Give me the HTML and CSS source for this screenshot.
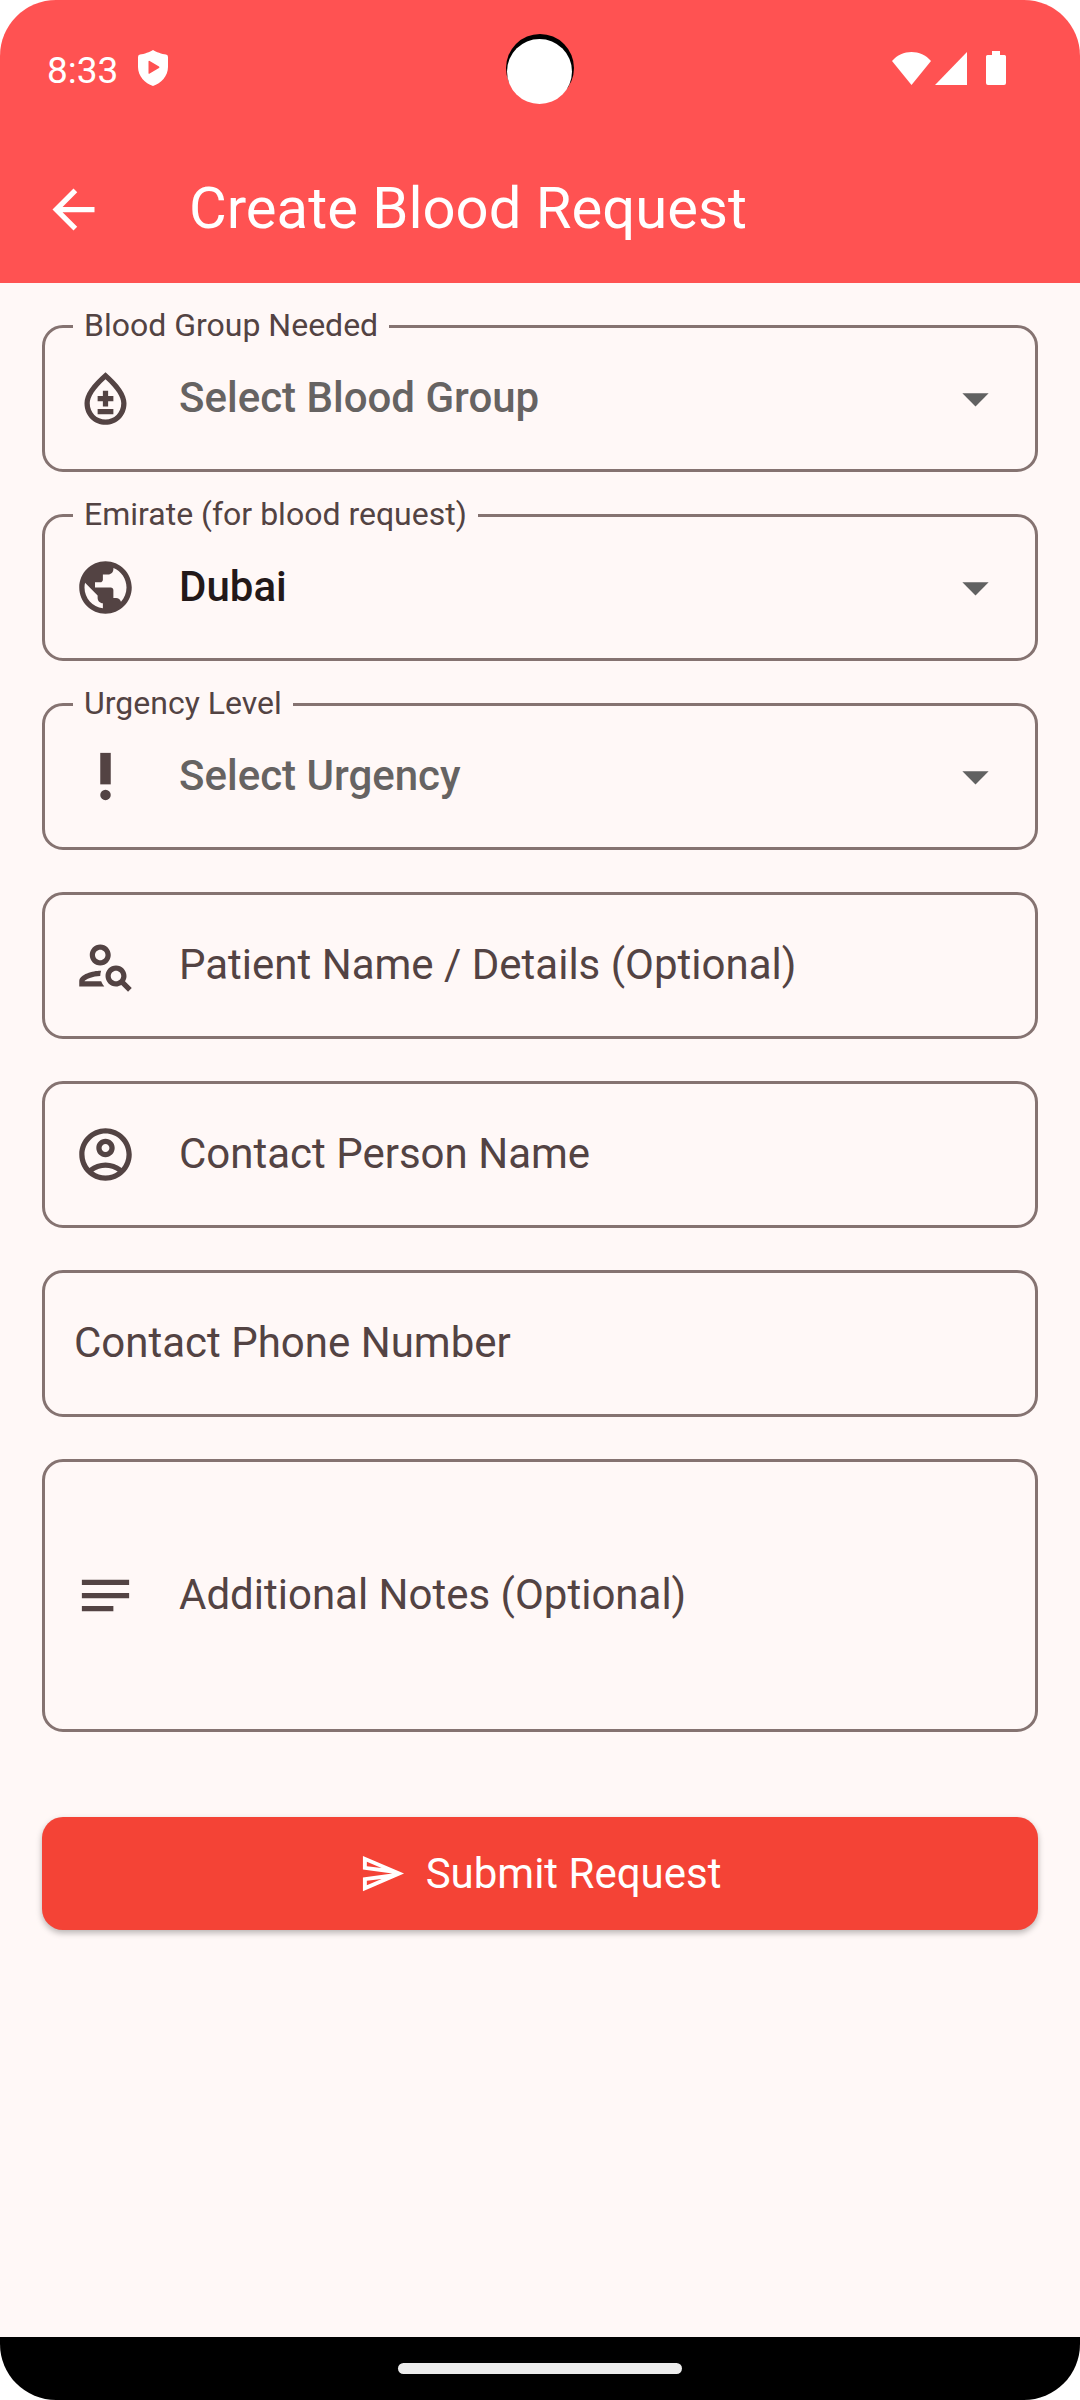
FILE: index.html
```html
<!DOCTYPE html>
<html lang="en">
<head>
<meta charset="utf-8">
<meta name="viewport" content="width=device-width, initial-scale=1">
<title>Create Blood Request</title>
<link rel="stylesheet" href="styles.css">
</head>
<body>
<div class="screen">
  <header class="top">
    <div class="status">
      <time class="clock">8:33</time>
      <svg class="shield" viewBox="0 0 30 36" aria-hidden="true"><path fill-rule="evenodd" d="M15 0C18 2 24 4 28 4.600Q30 5 30 7V17C30 26 23 33.500 15 36C7 33.500 0 26 0 17V7Q0 5 2 4.600C6 4 12 2 15 0ZM10.500 11.500V23Q10.500 24.300 11.700 23.600L21 18Q22 17.200 21 16.500L11.700 10.900Q10.500 10.200 10.500 11.500Z"/></svg>
      <span class="camera"></span>
      <div class="signals">
        <svg class="wifi" viewBox="0 0 39 33" aria-hidden="true"><path d="M0 9C10-3 29-3 39 9L19.500 33Z"/></svg>
        <svg class="cell" viewBox="0 0 32 33" aria-hidden="true"><path d="M32 0V33H0Z"/></svg>
        <svg class="battery" viewBox="0 0 20 34" aria-hidden="true"><path d="M6 0H14V4H18.500Q20 4 20 5.500V32Q20 34 18 34H2Q0 34 0 32V5.500Q0 4 1.500 4H6Z"/></svg>
      </div>
    </div>
    <div class="appbar">
      <button class="back" type="button" aria-label="Back">
        <svg class="icon" viewBox="0 0 24 24" aria-hidden="true"><path d="M20 11H7.830l5.590-5.590L12 4l-8 8 8 8 1.410-1.410L7.830 13H20v-2z"/></svg>
      </button>
      <h1 class="title">Create Blood Request</h1>
    </div>
  </header>

  <main class="content">
    <form class="form">
      <div class="field">
        <label class="float" for="group">Blood Group Needed</label>
        <svg class="icon" viewBox="0 0 24 24" aria-hidden="true"><path d="M12 2c-5.330 4.550-8 8.480-8 11.800 0 4.980 3.800 8.200 8 8.200s8-3.220 8-8.200c0-3.320-2.670-7.250-8-11.800zm0 18c-3.350 0-6-2.570-6-6.200 0-2.340 1.950-5.440 6-9.140 4.050 3.700 6 6.790 6 9.140 0 3.630-2.650 6.200-6 6.200zM9 16h6v2H9zM11 9h2v2h2v2h-2v2h-2v-2H9v-2h2z"/></svg>
        <select class="control choice unset" id="group">
          <option>Select Blood Group</option>
          <option>A+</option><option>A-</option><option>B+</option><option>B-</option>
          <option>AB+</option><option>AB-</option><option>O+</option><option>O-</option>
        </select>
        <svg class="icon caret" viewBox="0 0 24 24" aria-hidden="true"><path d="M7 10l5 5 5-5z"/></svg>
      </div>

      <div class="field">
        <label class="float" for="emirate">Emirate (for blood request)</label>
        <svg class="icon" viewBox="0 0 24 24" aria-hidden="true"><path d="M12 2C6.480 2 2 6.480 2 12s4.480 10 10 10 10-4.480 10-10S17.520 2 12 2zm-1 17.930c-3.950-.490-7-3.850-7-7.930 0-.620.080-1.210.210-1.790L9 15v1c0 1.100.900 2 2 2v1.930zm6.900-2.540c-.260-.810-1-1.390-1.900-1.390h-1v-3c0-.550-.450-1-1-1H8v-2h2c.550 0 1-.450 1-1V7h2c1.100 0 2-.900 2-2v-.410c2.930 1.190 5 4.060 5 7.410 0 2.080-.800 3.970-2.100 5.390z"/></svg>
        <select class="control choice" id="emirate">
          <option>Dubai</option><option>Abu Dhabi</option><option>Sharjah</option><option>Ajman</option>
        </select>
        <svg class="icon caret" viewBox="0 0 24 24" aria-hidden="true"><path d="M7 10l5 5 5-5z"/></svg>
      </div>

      <div class="field">
        <label class="float" for="urgency">Urgency Level</label>
        <svg class="icon" viewBox="0 0 24 24" aria-hidden="true"><circle cx="12" cy="19" r="2"/><path d="M10 3h4v12h-4z"/></svg>
        <select class="control choice unset" id="urgency">
          <option>Select Urgency</option><option>Low</option><option>Medium</option><option>High</option>
        </select>
        <svg class="icon caret" viewBox="0 0 24 24" aria-hidden="true"><path d="M7 10l5 5 5-5z"/></svg>
      </div>

      <div class="field">
        <svg class="icon" viewBox="0 0 24 24" aria-hidden="true"><path d="M10 12c2.210 0 4-1.790 4-4s-1.790-4-4-4-4 1.790-4 4 1.790 4 4 4zm0-6c1.100 0 2 .900 2 2s-.900 2-2 2-2-.900-2-2 .900-2 2-2zM4 18c.220-.720 3.310-2 6-2 0-.700.130-1.370.350-1.990C7.620 13.910 2 15.270 2 18v2h9.540c-.520-.580-.930-1.250-1.190-2H4zM19.430 18.020C19.790 17.430 20 16.740 20 16c0-2.210-1.790-4-4-4s-4 1.790-4 4 1.790 4 4 4c.740 0 1.430-.220 2.020-.570L20.590 22 22 20.590l-2.570-2.570zM16 18c-1.100 0-2-.900-2-2s.900-2 2-2 2 .900 2 2-.900 2-2 2z"/></svg>
        <input class="control" type="text" placeholder="Patient Name / Details (Optional)" aria-label="Patient Name / Details (Optional)">
      </div>

      <div class="field">
        <svg class="icon" viewBox="0 0 24 24" aria-hidden="true"><path d="M12 2C6.480 2 2 6.480 2 12s4.480 10 10 10 10-4.480 10-10S17.520 2 12 2zM7.350 18.500C8.660 17.560 10.260 17 12 17s3.340.560 4.650 1.500C15.340 19.440 13.740 20 12 20s-3.340-.560-4.650-1.500zm10.790-1.380C16.450 15.800 14.320 15 12 15s-4.450.800-6.140 2.120C4.700 15.730 4 13.950 4 12c0-4.420 3.580-8 8-8s8 3.580 8 8c0 1.950-.700 3.730-1.860 5.120zM12 6c-1.930 0-3.500 1.570-3.500 3.500S10.070 13 12 13s3.500-1.570 3.500-3.500S13.930 6 12 6zm0 5c-.830 0-1.500-.670-1.500-1.500S11.170 8 12 8s1.500.670 1.500 1.500S12.830 11 12 11z"/></svg>
        <input class="control" type="text" placeholder="Contact Person Name" aria-label="Contact Person Name">
      </div>

      <div class="field">
        <input class="control" type="tel" placeholder="Contact Phone Number" aria-label="Contact Phone Number">
      </div>

      <div class="field">
        <svg class="icon" viewBox="0 0 24 24" aria-hidden="true"><path d="M21 11H3v2h18v-2zM3 18h12v-2H3v2zM21 6H3v2h18V6z"/></svg>
        <textarea class="control notes" rows="1" placeholder="Additional Notes (Optional)" aria-label="Additional Notes (Optional)"></textarea>
      </div>

      <button class="submit" type="submit">
        <svg class="send" viewBox="0 0 24 24" aria-hidden="true"><path d="M4.010 6.030l7.510 3.220-7.520-1 .010-2.220m7.500 8.720L4 17.970v-2.220l7.510-1M2.010 3L2 10l15 2-15 2 .010 7L23 12 2.010 3z"/></svg>
        <span>Submit Request</span>
      </button>
    </form>
  </main>

  <footer class="navbar"><span class="pill"></span></footer>
</div>
</body>
</html>
```

FILE: styles.css
```css
:root {
  --surface: #fff8f7;
  --ink: #231919;
  --muted: #534343;
  --outline: #857371;
}

* {
  box-sizing: border-box;
}

body {
  margin: 0;
  background: #fff;
  color: var(--ink);
  font-family: Roboto, "Liberation Sans", sans-serif;
  font-size: 42px;
}

svg {
  display: block;
  flex: none;
  fill: currentColor;
}

.screen {
  display: flex;
  flex-direction: column;
  min-height: 100vh;
  border-radius: 56px;
  overflow: hidden;
  background: var(--surface);
}

/* Status bar and app bar */
.top {
  background: #ff5252;
  color: #fff;
}

.status {
  position: relative;
  display: flex;
  align-items: center;
  height: 136px;
  padding: 0 74px 0 47px;
}

.clock {
  padding-top: 6px;
  font-size: 37px;
  line-height: 44px;
}

.shield {
  width: 30px;
  height: 36px;
  margin-left: 20px;
}

.camera {
  position: absolute;
  top: 34px;
  left: 50%;
  width: 68px;
  height: 68px;
  margin-left: -34px;
  border-radius: 50%;
  background: #000;
}

.camera::after {
  content: "";
  position: absolute;
  top: 5px;
  left: 1px;
  width: 65px;
  height: 65px;
  border-radius: 50%;
  background: #fff;
}

.signals {
  display: flex;
  align-items: center;
  margin-left: auto;
}

.wifi {
  width: 39px;
  height: 33px;
}

.cell {
  width: 32px;
  height: 33px;
  margin-left: 4px;
}

.battery {
  width: 20px;
  height: 34px;
  margin-left: 19px;
}

.appbar {
  display: flex;
  align-items: center;
  height: 147px;
  padding: 0 42px;
}

.back {
  padding: 0;
  border: 0;
  background: none;
  color: inherit;
}

.title {
  margin: 0 0 0 84px;
  padding-bottom: 3px;
  font-size: 58px;
  font-weight: 400;
  line-height: 74px;
}

.icon {
  width: 63px;
  height: 63px;
}

/* Form */
.content {
  flex: 1;
  padding: 42px;
}

.form {
  display: flex;
  flex-direction: column;
  gap: 42px;
}

.field {
  position: relative;
  display: flex;
  align-items: center;
  gap: 42px;
  padding: 0 28px 0 29px;
  border: 3px solid var(--outline);
  border-radius: 21px;
  color: var(--muted);
}

.float {
  position: absolute;
  top: -22px;
  left: 28px;
  padding: 0 11px;
  background: var(--surface);
  font-size: 32px;
  line-height: 38px;
}

.control {
  flex: 1;
  min-width: 0;
  height: 141px;
  margin: 0;
  padding: 38px 0 40px;
  border: 0;
  outline: 0;
  background: none;
  color: var(--ink);
  font: inherit;
  line-height: 63px;
}

.control::placeholder {
  color: var(--muted);
  opacity: 1;
}

.choice {
  appearance: none;
  padding: 0 0 2px;
  font-weight: 500;
}

.unset {
  color: #666362;
}

.caret {
  color: #616161;
  pointer-events: none;
}

.notes {
  display: block;
  height: 267px;
  padding: 101px 0 103px;
  resize: none;
}

.submit {
  display: flex;
  align-items: center;
  justify-content: center;
  gap: 20px;
  margin-top: 43px;
  padding: 25px;
  border: 0;
  border-radius: 21px;
  background: #f44336;
  box-shadow: 0 3px 6px rgba(0, 0, 0, 0.28);
  color: #fff;
  font: inherit;
  line-height: 63px;
}

.send {
  width: 47px;
  height: 47px;
}

/* System navigation */
.navbar {
  display: flex;
  align-items: center;
  justify-content: center;
  height: 63px;
  background: #000;
}

.pill {
  width: 284px;
  height: 11px;
  border-radius: 6px;
  background: #ececec;
}
```
